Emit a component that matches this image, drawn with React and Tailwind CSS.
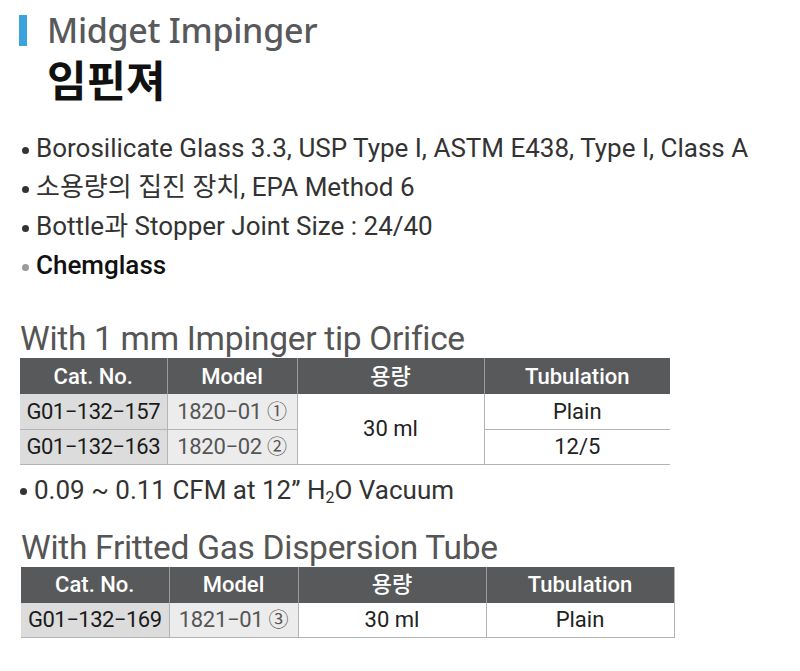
import React from 'react';

const latin = "font-['Roboto','Noto_Sans_CJK_KR',sans-serif]";

function Bullet({ children, dot = 'bg-[#333]' }) {
    return (
        <div className="flex items-center h-[39px]">
            <span className={`w-[7px] h-[7px] rounded-full ${dot} mr-[7px] mt-[3px]`} />
            {children}
        </div>
    );
}

function SpecTable({ widths, rows, rightBorder, merged }) {
    const cellBase = 'border-[#b4b4b4] text-center align-middle p-0';
    return (
        <table className={`border-collapse table-fixed text-[22px] ${rightBorder ? 'border-r border-[#b4b4b4]' : ''}`}>
            <colgroup>
                {widths.map((w, i) => <col key={i} style={{ width: w }} />)}
            </colgroup>
            <thead>
                <tr className="h-[36px] bg-[#58595b] text-white">
                    <th className="font-medium border-r border-[#9a9a9a]">Cat. No.</th>
                    <th className="font-medium border-r border-[#9a9a9a]">Model</th>
                    <th className="font-medium border-r border-[#9a9a9a]">용량</th>
                    <th className="font-medium">Tubulation</th>
                </tr>
            </thead>
            <tbody>
                {rows.map((r, i) => (
                    <tr key={r.cat} className="h-[35px]">
                        <td className={`${cellBase} border-b border-r bg-[#dcdcdc] text-[#1a1a1a] tracking-[-0.5px]`}>{r.cat}</td>
                        <td className={`${cellBase} border-b border-r bg-[#ececec] text-[#555] tracking-[-0.3px]`}>
                            {r.model} <span className="text-[20px]">{r.mark}</span>
                        </td>
                        {(!merged || i === 0) && (
                            <td rowSpan={merged ? rows.length : 1} className={`${cellBase} border-b border-r text-[#222]`}>30 ml</td>
                        )}
                        <td className={`${cellBase} border-b text-[#222]`}>{r.tub}</td>
                    </tr>
                ))}
            </tbody>
        </table>
    );
}

export default function App() {
    return (
        <div className={`w-[800px] h-[671px] bg-white ${latin} overflow-hidden`}>
            <div className="pl-[19px] pt-[11px]">
                <div className="flex items-center h-[38px]">
                    <span className="w-[8px] h-[31px] bg-[#3aa3dc]" />
                    <h1 className="ml-[20px] text-[34px] leading-none text-[#58595b] font-['Noto_Sans','Noto_Sans_CJK_KR',sans-serif] font-medium tracking-[-0.3px]">Midget Impinger</h1>
                </div>
                <h2 className="ml-[28px] mt-[4px] text-[43px] leading-[50px] font-bold text-[#111] font-['Noto_Sans_CJK_KR',sans-serif]">임핀져</h2>
            </div>

            <div className="pl-[22px] pt-[26px] text-[26px] text-[#333]">
                <Bullet><span>Borosilicate Glass 3.3, USP Type I, ASTM E438, Type I, Class A</span></Bullet>
                <Bullet><span>소용량의 집진 장치, EPA Method 6</span></Bullet>
                <Bullet><span>Bottle과 Stopper Joint Size : 24/40</span></Bullet>
                <Bullet dot="bg-[#9a9a9a]"><span className="text-[#111] font-medium">Chemglass</span></Bullet>
            </div>

            <div className="pl-[20px] pt-[35px]">
                <h3 className="text-[33.5px] leading-[38px] text-[#555] tracking-[-0.3px]">With 1 mm Impinger tip Orifice</h3>
                <SpecTable
                    widths={[147, 130, 187, 186]}
                    merged
                    rows={[
                        { cat: 'G01−132−157', model: '1820−01', mark: '①', tub: 'Plain' },
                        { cat: 'G01−132−163', model: '1820−02', mark: '②', tub: '12/5' },
                    ]}
                />
                <div className="mt-[6px] text-[26px] text-[#333]">
                    <Bullet><span>0.09 ~ 0.11 CFM at 12” H<sub className="text-[16px]">2</sub>O Vacuum</span></Bullet>
                </div>
            </div>

            <div className="pl-[21px] pt-[19px]">
                <h3 className="text-[33.5px] leading-[38px] text-[#555] tracking-[-0.3px]">With Fritted Gas Dispersion Tube</h3>
                <SpecTable
                    widths={[148, 129, 188, 188]}
                    rightBorder
                    rows={[{ cat: 'G01−132−169', model: '1821−01', mark: '③', tub: 'Plain' }]}
                />
            </div>
        </div>
    );
}
